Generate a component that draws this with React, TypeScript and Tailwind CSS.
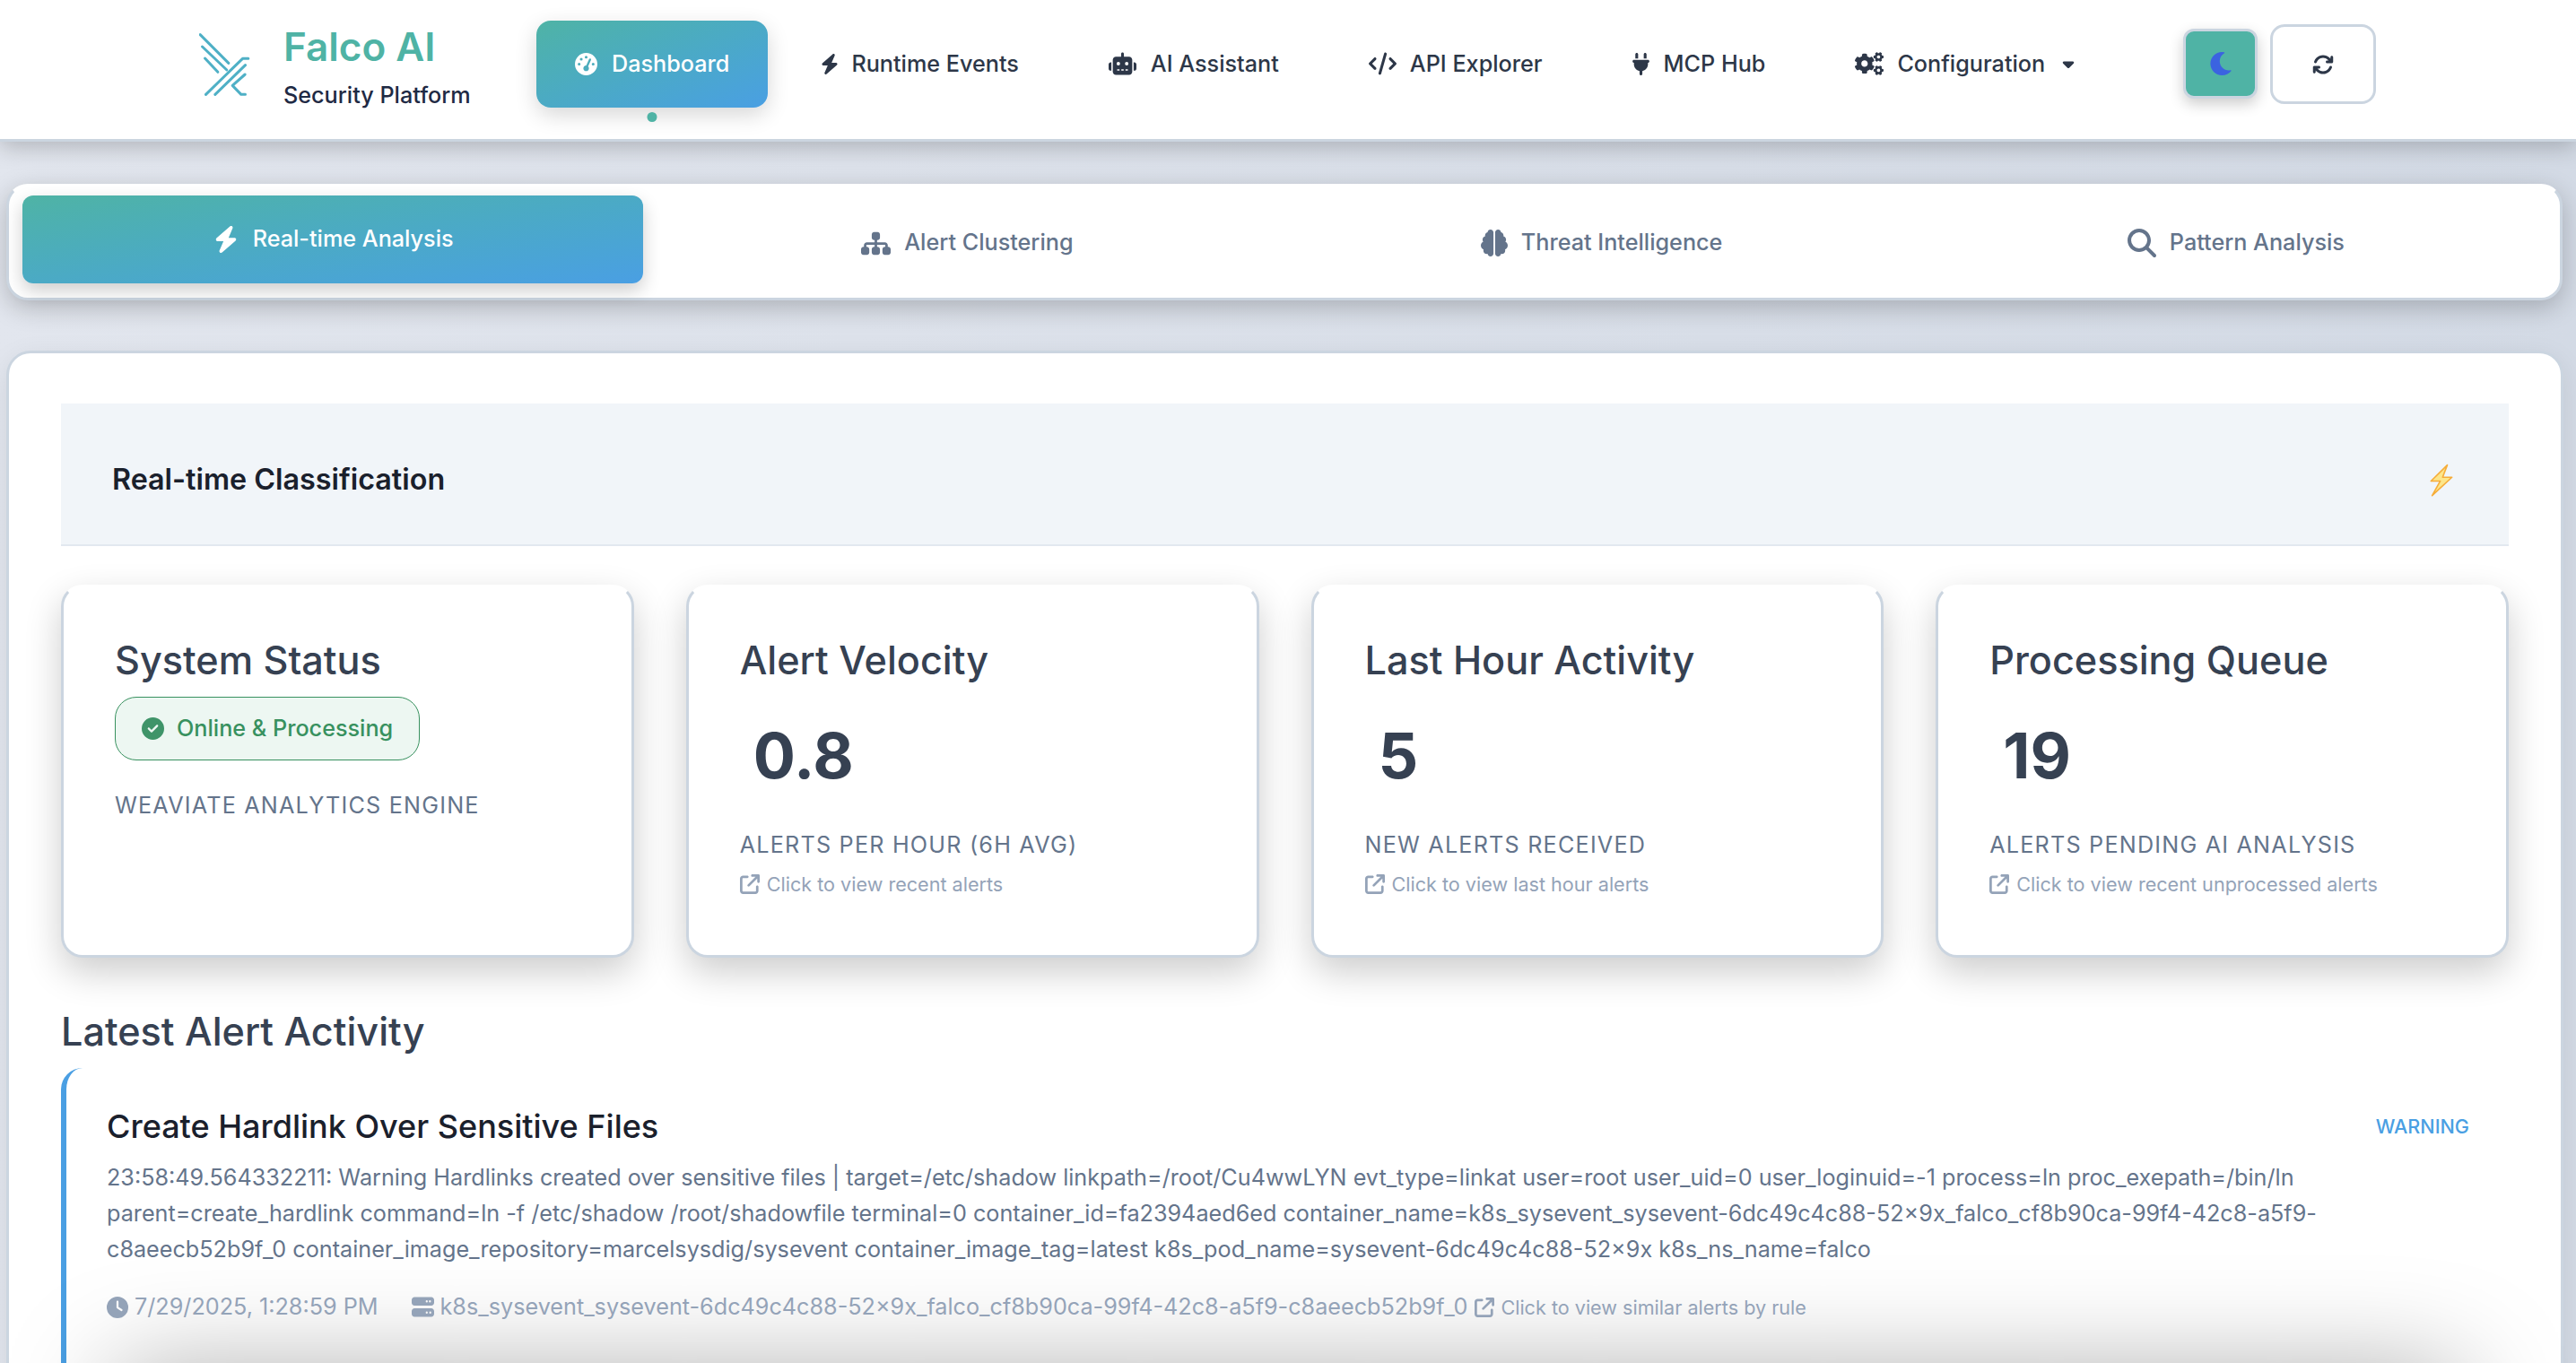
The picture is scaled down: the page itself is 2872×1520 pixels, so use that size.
import React from 'react';
import {
  FaArrowsRotate,
  FaArrowUpRightFromSquare,
  FaBolt,
  FaBrain,
  FaCaretDown,
  FaCircleCheck,
  FaClock,
  FaCode,
  FaGaugeHigh,
  FaMagnifyingGlass,
  FaPlug,
  FaRobot,
  FaServer,
  FaSitemap,
} from 'react-icons/fa6';
import { FaCogs, FaMoon } from 'react-icons/fa';

const navItems = [
  { label: 'Runtime Events', icon: FaBolt, iconClass: 'h-[25px] w-[20px]', gap: 'gap-[14px]' },
  { label: 'AI Assistant', icon: FaRobot, iconClass: 'h-[26px] w-[31px]', gap: 'gap-[16px]' },
  { label: 'API Explorer', icon: FaCode, iconClass: 'h-[26px] w-[31px]', gap: 'gap-[15px]' },
  { label: 'MCP Hub', icon: FaPlug, iconClass: 'h-[25px] w-[19px]', gap: 'gap-[16px]' },
];

const tabs = [
  { label: 'Alert Clustering', icon: FaSitemap, iconClass: 'h-[33px] w-auto' },
  { label: 'Threat Intelligence', icon: FaBrain, iconClass: 'h-[30px] w-auto' },
  { label: 'Pattern Analysis', icon: FaMagnifyingGlass, iconClass: 'h-[32px] w-auto' },
];

const metrics = [
  { title: 'Alert Velocity', value: '0.8', label: 'ALERTS PER HOUR (6H AVG)', hint: 'Click to view recent alerts' },
  { title: 'Last Hour Activity', value: '5', label: 'NEW ALERTS RECEIVED', hint: 'Click to view last hour alerts' },
  { title: 'Processing Queue', value: '19', label: 'ALERTS PENDING AI ANALYSIS', hint: 'Click to view recent unprocessed alerts' },
];

export default function App() {
  return (
    <div className="h-[1520px] overflow-hidden bg-gradient-to-r from-[#e2e6ee] to-[#d3dae5] font-['Inter','Liberation_Sans',sans-serif]">
      {/* Header */}
      <header className="h-[158px] bg-white border-b-[3px] border-[#cbd5e0] shadow-[0_6px_24px_rgba(0,0,0,0.22)] flex items-start pl-[222px] relative">
        <svg viewBox="130 80 170 210" className="w-[57px] h-[70px] mt-[37px] shrink-0" fill="none" stroke="#4fb0c6" strokeWidth="9" strokeLinecap="round" strokeLinejoin="round">
          <path d="M133 85 L228 180" />
          <path d="M140 125 L222 203" />
          <path d="M149 164 L192 210" />
          <path d="M152 285 L275 165 L294 165" />
          <path d="M183 285 L284 187" />
          <path d="M283 218 L241 255 L270 285 L284 285" />
        </svg>
        <div className="ml-[37px] mt-[26px] w-[282px] shrink-0">
          <div className="text-[44px] leading-[52px] font-semibold text-[#4fb3a5]">Falco AI</div>
          <div className="text-[25.2px] leading-[38px] font-medium text-[#1f2a44] mt-[9px]">Security Platform</div>
        </div>
        <div className="relative mt-[23px] shrink-0">
          <button className="h-[97px] px-[43px] flex items-center gap-[16px] rounded-[16px] bg-gradient-to-br from-[#4fb3a5] to-[#4a9fe3] text-white text-[25.2px] font-medium shadow-[0_8px_24px_rgba(0,0,0,0.16)]">
            <FaGaugeHigh className="h-[25px] w-auto" />
            Dashboard
          </button>
          <span className="absolute left-1/2 -translate-x-1/2 top-[102px] w-[11px] h-[11px] rounded-full bg-[#4fb3a5]" />
        </div>
        <nav className="flex items-center mt-[23px] h-[97px] ml-[17px] gap-[16px] text-[25.2px] font-medium text-[#2d3748]">
          {navItems.map(item => (
            <button key={item.label} className={`flex items-center px-[42px] ${item.gap}`}>
              <item.icon className={item.iconClass} />
              {item.label}
            </button>
          ))}
          <button className="flex items-center gap-[15px] px-[42px]">
            <FaCogs className="h-[26px] w-[32px]" />
            Configuration
            <FaCaretDown className="h-[20px] w-auto ml-[1px]" />
          </button>
        </nav>
        <button className="w-[83px] h-[78px] mt-[32px] ml-[76px] shrink-0 rounded-[12px] bg-[#4fb3a5] border-[3px] border-[#cbd5e0] flex items-center justify-center shadow-[0_6px_16px_rgba(0,0,0,0.2)]">
          <FaMoon className="h-[26px] w-auto text-[#3b63e0]" />
        </button>
        <button className="w-[118px] h-[89px] mt-[27px] ml-[14px] shrink-0 rounded-[16px] bg-white border-[3px] border-[#cbd5e0] flex items-center justify-center text-[#2d3748]">
          <FaArrowsRotate className="h-[24px] w-auto" />
        </button>
      </header>

      {/* Tabs */}
      <div className="ml-[7px] mr-[15px] mt-[47px] h-[130px] rounded-[24px] bg-white border-[3px] border-[#cbd5e0] border-t-white shadow-[0_8px_28px_rgba(0,0,0,0.22)] flex gap-[15px] px-[15px] pt-[12px] pb-[14px]">
        <button className="flex-1 -translate-y-[2px] rounded-[12px] bg-gradient-to-br from-[#4fb3a5] to-[#4a9fe3] text-white text-[25.2px] font-medium flex items-center justify-center gap-[15px] shadow-[0_8px_20px_rgba(0,0,0,0.2)]">
          <FaBolt className="h-[30px] w-auto" />
          Real-time Analysis
        </button>
        {tabs.map(tab => (
          <button key={tab.label} className="flex-1 pt-[4px] text-[#64748b] text-[25.2px] font-medium flex items-center justify-center gap-[15px]">
            <tab.icon className={tab.iconClass} />
            {tab.label}
          </button>
        ))}
      </div>

      {/* Main panel */}
      <main className="ml-[10px] mr-[17px] mt-[59px] rounded-t-[24px] bg-white px-[58px] pt-[56px] shadow-[0_0_0_3px_#cbd5e0,0_8px_32px_rgba(0,0,0,0.1)]">
        <div className="h-[159px] bg-[#f1f5f9] border-b-[2px] border-[#e2e8f0] flex items-center justify-between pl-[57px] pr-[62px] pt-[14px]">
          <h2 className="text-[32.3px] font-semibold text-[#1a202c]">Real-time Classification</h2>
          <svg viewBox="144 78 80 114" className="w-[26px] h-[37px]">
            <path d="M204 83 L148 138 L180 138 L152 188 L220 125 L188 125 Z" fill="#fde68a" stroke="#f6ad3a" strokeWidth="5" strokeLinejoin="round" />
          </svg>
        </div>

        <div className="grid grid-cols-4 gap-[58px] mt-[43px]">
          <div className="h-[416px] rounded-[24px] bg-white border-[3px] border-[#cbd5e0] border-t-white shadow-[0_16px_40px_rgba(0,0,0,0.2)] px-[57px] pt-[55px]">
            <h3 className="text-[43.2px] leading-[52px] font-medium text-[#364152]">System Status</h3>
            <div className="inline-flex items-center gap-[14px] h-[71px] px-[29px] mt-[15px] rounded-[24px] bg-[#edf7f2] border-[1.5px] border-[#38915f] text-[#38915f] text-[25.2px] font-medium">
              <FaCircleCheck className="h-[25px] w-auto text-[#3f9469]" />
              Online &amp; Processing
            </div>
            <div className="mt-[32px] text-[25.2px] text-[#64748b] tracking-[1.2px]">WEAVIATE ANALYTICS ENGINE</div>
          </div>
          {metrics.map(m => (
            <div key={m.title} className="h-[416px] rounded-[24px] bg-white border-[3px] border-[#cbd5e0] border-t-white shadow-[0_16px_40px_rgba(0,0,0,0.2)] px-[57px] pt-[55px]">
              <h3 className="text-[43.2px] leading-[52px] font-medium text-[#364152]">{m.title}</h3>
              <div className="text-[70px] leading-[86px] font-bold text-[#364152] pl-[15px] mt-[38px]">{m.value}</div>
              <div className="mt-[38px] text-[25.2px] text-[#64748b] tracking-[1.2px]">{m.label}</div>
              <div className="mt-[8px] flex items-center gap-[8px] text-[21.6px] text-[#94a3b8]">
                <FaArrowUpRightFromSquare className="h-[22px] w-auto" />
                {m.hint}
              </div>
            </div>
          ))}
        </div>

        <h2 className="mt-[56px] text-[43.2px] leading-[52px] font-medium text-[#364152]">Latest Alert Activity</h2>

        <div className="mt-[15px] rounded-[24px] border-l-[6px] border-[#4a9fe3] bg-white pl-[45px] pr-[44px] pt-[40px]">
          <div className="flex items-center justify-between">
            <h3 className="text-[36px] leading-[50px] font-medium text-[#1a202c]">Create Hardlink Over Sensitive Files</h3>
            <span className="text-[21.6px] font-medium text-[#4a9fe3]">WARNING</span>
          </div>
          <p className="mt-[12px] text-[25.2px] leading-[40px] text-[#64748b]">
            23:58:49.564332211: Warning Hardlinks created over sensitive files | target=/etc/shadow linkpath=/root/Cu4wwLYN evt_type=linkat user=root user_uid=0 user_loginuid=-1 process=ln proc_exepath=/bin/ln parent=create_hardlink command=ln -f /etc/shadow /root/shadowfile terminal=0 container_id=fa2394aed6ed container_name=k8s_sysevent_sysevent-6dc49c4c88-52×9x_falco_cf8b90ca-99f4-42c8-a5f9-c8aeecb52b9f_0 container_image_repository=marcelsysdig/sysevent container_image_tag=latest k8s_pod_name=sysevent-6dc49c4c88-52×9x k8s_ns_name=falco
          </p>
          <div className="mt-[26px] flex items-center text-[25.2px] text-[#94a3b8]">
            <FaClock className="h-[24px] w-auto mr-[7px]" />
            7/29/2025, 1:28:59 PM
            <FaServer className="h-[25px] w-auto ml-[37px] mr-[7px]" />
            k8s_sysevent_sysevent-6dc49c4c88-52×9x_falco_cf8b90ca-99f4-42c8-a5f9-c8aeecb52b9f_0
            <FaArrowUpRightFromSquare className="h-[22px] w-auto ml-[8px] mr-[7px]" />
            <span className="text-[21.6px]">Click to view similar alerts by rule</span>
          </div>
          <div className="h-[200px] mt-[55px] mx-[10px] shadow-[0_0_120px_rgba(0,0,0,0.35)]" />
        </div>
      </main>
    </div>
  );
}
